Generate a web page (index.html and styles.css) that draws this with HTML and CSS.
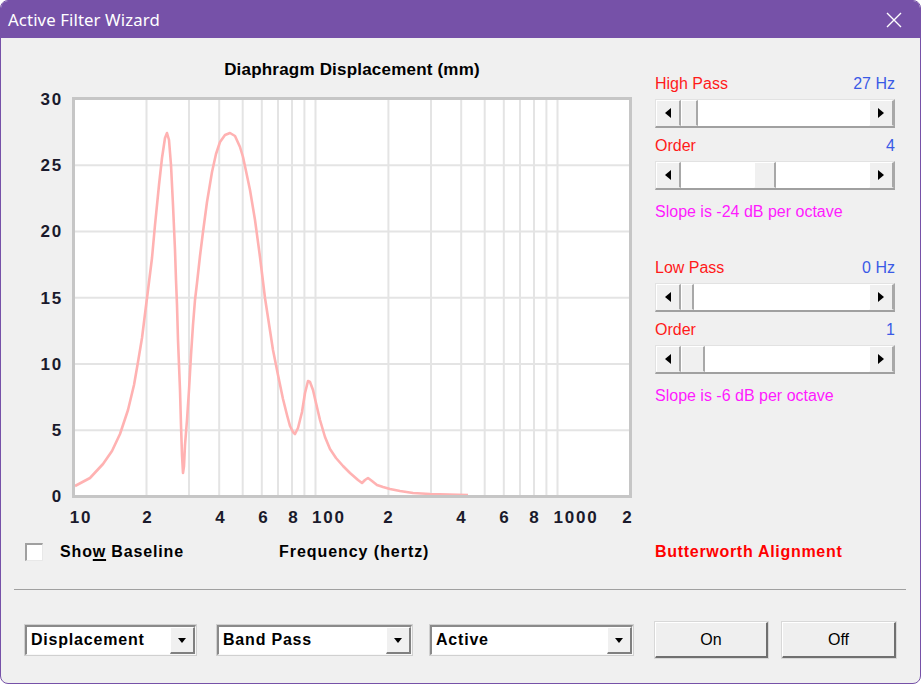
FILE: index.html
```html
<!DOCTYPE html>
<html>
<head>
<meta charset="utf-8">
<title>Active Filter Wizard</title>
<link rel="stylesheet" href="styles.css">
</head>
<body>
<div class="window">
  <div class="titlebar">
    <span class="title">Active Filter Wizard</span>
    <svg class="close" width="16" height="16" viewBox="0 0 16 16"><path d="M1 1 L15 15 M15 1 L1 15" stroke="#fff" stroke-width="1.4" fill="none"/></svg>
  </div>
  <div class="client">
    <div class="main">
      <svg class="chart" width="639" height="492" viewBox="1 38 639 492">
        <rect x="73" y="98" width="558" height="399" fill="#fff"/>
        <g stroke="#e4e4e4" stroke-width="2">
          <line x1="73" x2="631" y1="165.25" y2="165.25"/>
          <line x1="73" x2="631" y1="231.5" y2="231.5"/>
          <line x1="73" x2="631" y1="297.75" y2="297.75"/>
          <line x1="73" x2="631" y1="364" y2="364"/>
          <line x1="73" x2="631" y1="430.25" y2="430.25"/>
          <line y1="98" y2="497" x1="146.5" x2="146.5"/>
          <line y1="98" y2="497" x1="189" x2="189"/>
          <line y1="98" y2="497" x1="219.2" x2="219.2"/>
          <line y1="98" y2="497" x1="242.7" x2="242.7"/>
          <line y1="98" y2="497" x1="261.8" x2="261.8"/>
          <line y1="98" y2="497" x1="278" x2="278"/>
          <line y1="98" y2="497" x1="292" x2="292"/>
          <line y1="98" y2="497" x1="304.4" x2="304.4"/>
          <line y1="98" y2="497" x1="315.5" x2="315.5"/>
          <line y1="98" y2="497" x1="388.4" x2="388.4"/>
          <line y1="98" y2="497" x1="431" x2="431"/>
          <line y1="98" y2="497" x1="461.2" x2="461.2"/>
          <line y1="98" y2="497" x1="484.7" x2="484.7"/>
          <line y1="98" y2="497" x1="503.8" x2="503.8"/>
          <line y1="98" y2="497" x1="520" x2="520"/>
          <line y1="98" y2="497" x1="534" x2="534"/>
          <line y1="98" y2="497" x1="546.4" x2="546.4"/>
          <line y1="98" y2="497" x1="557.5" x2="557.5"/>
        </g>
        <polyline fill="none" stroke="#ffb2b2" stroke-width="2.6" stroke-linejoin="round"
          points="75,486 90,478 103,464 112,451 120,434 128,410 134,385 138,362 142,338 147,298 152,258 155,225 159,185 162,158 165,138 167,133 169,140 171,165 173,205 175,250 176,280 177,305 178,340 180,390 181,425 182,455 183,473 184,466 185,445 187,420 189,390 191,355 193,325 195,300 197,283 200,256 203,232 207,202 212,172 216,154 220,142 225,135 230,133 235,136 240,147 243,157 246,171 250,190 255,220 260,257 265,298 269,324 273,350 278,375 283,399 287,415 290,426 293,432 295,434 298,428 302,412 305,393 308,381 310,382 313,390 316,403 320,420 325,437 330,449 336,458 343,466 350,473 358,480 362,483 365,480 368,478 372,481 377,485 383,487 390,489 400,491 413,493 430,494 468,495"/>
        <rect x="73.5" y="98.5" width="557" height="398" fill="none" stroke="#c6c6c6" stroke-width="3"/>
        <text class="ctitle" x="352" y="75" text-anchor="middle">Diaphragm Displacement (mm)</text>
        <g class="ylab" text-anchor="end">
          <text x="63" y="105">30</text>
          <text x="63" y="171">25</text>
          <text x="63" y="237">20</text>
          <text x="63" y="304">15</text>
          <text x="63" y="370">10</text>
          <text x="63" y="436">5</text>
          <text x="63" y="502">0</text>
        </g>
        <g class="xlab" text-anchor="middle">
          <text x="81" y="523">10</text>
          <text x="148" y="523">2</text>
          <text x="221" y="523">4</text>
          <text x="264" y="523">6</text>
          <text x="294" y="523">8</text>
          <text x="329" y="523">100</text>
          <text x="389" y="523">2</text>
          <text x="462" y="523">4</text>
          <text x="505" y="523">6</text>
          <text x="535" y="523">8</text>
          <text x="576" y="523">1000</text>
          <text x="628" y="523">2</text>
        </g>
      </svg>
      <div class="panel">
        <div class="group">
          <div class="lrow"><span class="lbl">High Pass</span><span class="val">27 Hz</span></div>
          <div class="sb">
            <div class="sb-btn"><span class="tri-l"></span></div>
            <div class="sb-track"><span class="sb-pad" style="width:0px"></span><span class="sb-thumb" style="width:17px"></span></div>
            <div class="sb-btn"><span class="tri-r"></span></div>
          </div>
          <div class="lrow gap"><span class="lbl">Order</span><span class="val">4</span></div>
          <div class="sb">
            <div class="sb-btn"><span class="tri-l"></span></div>
            <div class="sb-track"><span class="sb-pad" style="width:73px"></span><span class="sb-thumb" style="width:22px"></span></div>
            <div class="sb-btn"><span class="tri-r"></span></div>
          </div>
          <div class="slope">Slope is -24 dB per octave</div>
        </div>
        <div class="group second">
          <div class="lrow"><span class="lbl">Low Pass</span><span class="val">0 Hz</span></div>
          <div class="sb">
            <div class="sb-btn"><span class="tri-l"></span></div>
            <div class="sb-track"><span class="sb-pad" style="width:0px"></span><span class="sb-thumb" style="width:13px"></span></div>
            <div class="sb-btn"><span class="tri-r"></span></div>
          </div>
          <div class="lrow gap"><span class="lbl">Order</span><span class="val">1</span></div>
          <div class="sb">
            <div class="sb-btn"><span class="tri-l"></span></div>
            <div class="sb-track"><span class="sb-pad" style="width:0px"></span><span class="sb-thumb" style="width:24px"></span></div>
            <div class="sb-btn"><span class="tri-r"></span></div>
          </div>
          <div class="slope">Slope is -6 dB per octave</div>
        </div>
      </div>
    </div>
    <div class="legend">
      <span></span>
      <span class="check"></span>
      <span></span>
      <span class="baseline">Sho<u>w</u> Baseline</span>
      <span class="freq">Frequency (hertz)</span>
      <span class="align">Butterworth Alignment</span>
    </div>
    <div class="sep"></div>
    <div class="controls">
      <div class="dd w1"><span class="dd-text">Displacement</span><span class="dd-btn"><span class="tri-d"></span></span></div>
      <div class="dd w2"><span class="dd-text">Band Pass</span><span class="dd-btn"><span class="tri-d"></span></span></div>
      <div class="dd w3"><span class="dd-text">Active</span><span class="dd-btn"><span class="tri-d"></span></span></div>
      <button class="btn b1">On</button>
      <button class="btn b2">Off</button>
    </div>
  </div>
</div>
</body>
</html>
```
FILE: styles.css
```css
* { box-sizing: border-box; }
html, body { margin: 0; padding: 0; background: #ffffff; }
body {
  width: 921px;
  height: 684px;
  overflow: hidden;
  font-family: "Liberation Sans", Arial, sans-serif;
}
.window {
  width: 921px;
  height: 684px;
  border: 1px solid #7651a8;
  border-radius: 8px;
  overflow: hidden;
  display: flex;
  flex-direction: column;
  background: #f0f0f0;
}
.titlebar {
  height: 37px;
  flex: none;
  background: #7651a8;
  color: #ffffff;
  display: flex;
  align-items: center;
  justify-content: space-between;
  padding: 0 18px 0 7px;
}
.title {
  font-family: "Noto Sans", "Open Sans", sans-serif;
  font-size: 16.8px;
  letter-spacing: 0.1px;
}
.close { display: block; margin-top: 1px; }
.client { flex: 1; display: flex; flex-direction: column; }
.main { display: flex; height: 492px; flex: none; }
.chart { display: block; flex: none; }
.ctitle { font-family: "Liberation Sans", Arial, sans-serif; font-weight: bold; font-size: 17px; letter-spacing: 0.2px; fill: #000; }
.ylab text, .xlab text { font-family: "Liberation Sans", Arial, sans-serif; font-weight: bold; font-size: 17px; letter-spacing: 1.8px; fill: #1a1a2c; }

.panel {
  margin-left: 15px;
  margin-top: 36px;
  width: 240px;
  display: flex;
  flex-direction: column;
  font-size: 16px;
}
.group.second { margin-top: 36px; }
.lrow {
  display: flex;
  justify-content: space-between;
  height: 20px;
  line-height: 20px;
}
.lrow.gap { margin-top: 8px; }
.lbl { color: #ff1a1a; }
.val { color: #3a5ae6; }
.slope {
  margin-top: 12px;
  height: 20px;
  line-height: 20px;
  color: #ff1aff;
}
.sb {
  margin-top: 5px;
  height: 29px;
  display: flex;
  background: #ffffff;
  border-style: solid;
  border-width: 1px 1px 2px 1px;
  border-color: #e2e2e2 #a8a8a8 #a0a0a0 #e2e2e2;
}
.sb-btn {
  width: 25px;
  flex: none;
  background: #f0f0f0;
  border-style: solid;
  border-width: 1px 2px 1px 1px;
  border-color: #ffffff #a8a8a8 #f0f0f0 #ffffff;
  display: flex;
  align-items: center;
  justify-content: center;
}
.sb-track { flex: 1; display: flex; }
.sb-pad { display: block; flex: none; }
.sb-thumb {
  display: block;
  flex: none;
  background: #f0f0f0;
  border-style: solid;
  border-width: 1px 2px 1px 1px;
  border-color: #ffffff #a8a8a8 #f0f0f0 #ffffff;
}
.tri-l {
  width: 0; height: 0;
  border-top: 5px solid transparent;
  border-bottom: 5px solid transparent;
  border-right: 6px solid #000;
}
.tri-r {
  width: 0; height: 0;
  border-top: 5px solid transparent;
  border-bottom: 5px solid transparent;
  border-left: 6px solid #000;
}

.legend {
  height: 44px;
  flex: none;
  display: grid;
  grid-template-columns: 24px 18px 17px 219px 376px auto;
  align-items: center;
  font-weight: bold;
  font-size: 16px;
  color: #000;
}
.check {
  width: 18px;
  height: 18px;
  background: #ffffff;
  border-style: solid;
  border-width: 2px 1px 1px 2px;
  border-color: #a0a0a0 #e8e8e8 #e8e8e8 #a0a0a0;
}
.baseline { letter-spacing: 0.85px; }
.baseline u { text-decoration-thickness: 2px; text-underline-offset: 2px; }
.freq { letter-spacing: 0.95px; }
.align { color: #ff0000; letter-spacing: 0.7px; }
.sep {
  margin: 15px 14px 0 13px;
  height: 1px;
  flex: none;
  background: #a0a0a0;
}
.controls {
  margin-top: 32px;
  height: 36px;
  display: flex;
  align-items: center;
  padding-left: 24px;
}
.dd {
  height: 30px;
  display: flex;
  background: #ffffff;
  border-style: solid;
  border-width: 2px 1px 1px 2px;
  border-color: #8a8a8a #f8f8f8 #f8f8f8 #8a8a8a;
  box-shadow: 0 0 0 1px #d0d0d0;
}
.w1 { width: 171px; }
.w2 { width: 195px; margin-left: 21px; }
.w3 { width: 203px; margin-left: 18px; }
.dd-text {
  flex: 1;
  padding-left: 4px;
  font-weight: bold;
  font-size: 16px;
  letter-spacing: 0.8px;
  line-height: 26px;
  color: #000;
  white-space: nowrap;
  overflow: hidden;
}
.dd-btn {
  width: 25px;
  flex: none;
  background: #f0f0f0;
  border-style: solid;
  border-width: 1px 2px 2px 1px;
  border-color: #ffffff #808080 #808080 #ffffff;
  display: flex;
  align-items: center;
  justify-content: center;
}
.tri-d {
  width: 0; height: 0;
  border-left: 4px solid transparent;
  border-right: 4px solid transparent;
  border-top: 5px solid #000;
}
.btn {
  height: 36px;
  margin: 0;
  padding: 0;
  background: #efefef;
  border-style: solid;
  border-width: 1px 2px 2px 1px;
  border-color: #ffffff #707070 #707070 #ffffff;
  box-shadow: 0 0 0 1px #d8d8d8;
  font-family: "Liberation Sans", Arial, sans-serif;
  font-size: 16px;
  color: #000;
}
.b1 { width: 113px; margin-left: 22px; }
.b2 { width: 114px; margin-left: 14px; }
```
